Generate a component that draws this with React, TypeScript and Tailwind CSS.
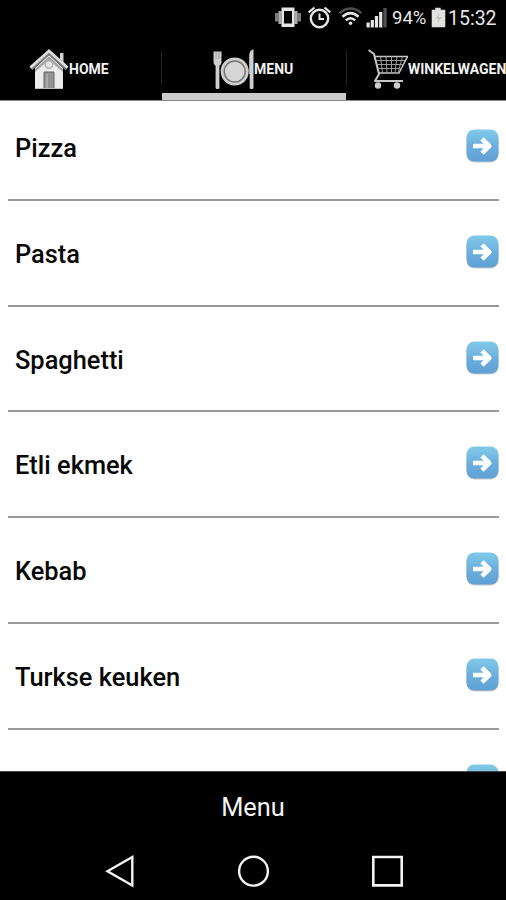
import React, { useState } from 'react'

const TABS = [
  { id: 'home', label: 'HOME' },
  { id: 'menu', label: 'MENU' },
  { id: 'cart', label: 'WINKELWAGEN' },
]

const CATEGORIES = ['Pizza', 'Pasta', 'Spaghetti', 'Etli ekmek', 'Kebab', 'Turkse keuken']

function StatusBar() {
  return (
    <div className="flex h-[38px] shrink-0 items-start pl-[274px] text-[#e6e6e6]">
      <svg className="mt-[7px] h-[21px] w-[28px] shrink-0" viewBox="0 0 28 21" fill="currentColor">
        <path fillRule="evenodd" d="M7.5 0.5h13v19.5h-13zM10 4v12.5h8V4z" />
        <path d="M4.5 4h3v13h-3zM20.5 4h3v13h-3z" opacity="0.75" />
        <path d="M1 6h3.5v8.5H1zM23.5 6H27v8.5h-3.5z" opacity="0.55" />
      </svg>
      <svg className="ml-[5px] mt-[6px] h-[23px] w-[25px] shrink-0" viewBox="0 0 25 23" fill="none" stroke="currentColor">
        <circle cx="12.5" cy="12.5" r="8.7" strokeWidth="2.4" />
        <path d="M12.5 7.5v5.5h4.5" strokeWidth="2" />
        <path d="M1.7 6.3L7.5 1.5M23.3 6.3L17.5 1.5" strokeWidth="2.2" />
      </svg>
      <svg className="ml-[6px] mt-[7px] h-[19px] w-[26px] shrink-0" viewBox="0 0 26 19" fill="none" stroke="currentColor">
        <path d="M1.5 6.2Q12.5-3 23.5 6.2" strokeWidth="2.4" opacity="0.35" />
        <path d="M4.5 9.7Q12.5 2.6 20.5 9.7" strokeWidth="2.6" />
        <path d="M7.8 13.3Q12.5 9 17.2 13.3" strokeWidth="2.4" />
        <circle cx="12.5" cy="16.2" r="1.8" fill="currentColor" stroke="none" />
      </svg>
      <svg className="ml-[2px] mt-[7px] h-[21px] w-[22px] shrink-0" viewBox="0 0 22 21" fill="currentColor">
        <path d="M0.5 15.5h3.2V20.5H0.5zM4.7 13h3.2v7.5H4.7zM8.9 9h3.2v11.5H8.9zM13.1 5h3.2v15.5h-3.2z" />
        <path d="M17.3 1h3.4v19.5h-3.4z" opacity="0.35" />
      </svg>
      <span className="ml-[4px] mt-[6px] w-[36px] whitespace-nowrap text-[18.5px] leading-[24px]">94%</span>
      <svg className="ml-[3px] mt-[7px] h-[21px] w-[15px] shrink-0" viewBox="0 0 15 21">
        <path d="M4.3 0.8h5.4v2h4.6v17.4H0.7V2.8h3.6z" fill="#e2e2e2" />
        <path d="M8.5 5.5L4.5 11.5h3l-1 5 4.2-6.5H7.8z" fill="#c4c4bc" />
      </svg>
      <span className="ml-[2px] mt-[7px] whitespace-nowrap text-[19.5px] leading-[24px]">15:32</span>
    </div>
  )
}

function HouseIcon() {
  return (
    <svg className="h-[42px] w-[40px] shrink-0" viewBox="0 0 40 42">
      <path d="M31 5h3.5v11L31 12.5z" fill="#d0d0d0" />
      <path d="M6 20L20 7l14 13v20.5H6z" fill="#ececec" />
      <path d="M6 21L20 8.5 34 21v3L20 12 6 24z" fill="#a4a4a4" />
      <path d="M1.8 20.5L20 4l18.2 16.5" fill="none" stroke="#808080" strokeWidth="4.5" />
      <path d="M1.5 19.5L20 3l18.5 16.5" fill="none" stroke="#dddddd" strokeWidth="2.6" />
      <circle cx="20" cy="16.5" r="3.8" fill="#e4e4e4" stroke="#b0b0b0" strokeWidth="1.5" />
      <path d="M15 24h10v16.5H15z" fill="#929292" stroke="#666666" />
      <path d="M18 26v14" stroke="#aaaaaa" strokeWidth="2" />
      <path d="M6 40.5h28" stroke="#bdbdbd" />
    </svg>
  )
}

function PlateIcon() {
  return (
    <svg className="h-[42px] w-[42px] shrink-0" viewBox="0 0 42 42" fill="#cfcfcf">
      <path d="M1.5 3.5h8v10c0 2.300-.8 3.500-2.100 4.200V40c0 1.300-3.800 1.300-3.800 0V17.700C2.300 17 1.500 15.800 1.500 13.500z" />
      <path d="M4.100 3.500V11M6.900 3.500V11" stroke="#777777" strokeWidth="0.6" />
      <circle cx="22.700" cy="23.500" r="14" />
      <circle cx="22.700" cy="23.500" r="10.500" fill="#d6d6d6" stroke="#777777" strokeWidth="1.5" />
      <path d="M41.500 1.500V40c0 1.300-3.800 1.300-3.800 0V26h-.5V8c0-4 1.800-6.500 4.300-6.500z" />
    </svg>
  )
}

function CartIcon() {
  return (
    <svg className="h-[42px] w-[40px] shrink-0" viewBox="0 0 40 42" fill="none" stroke="#c6c6c6">
      <path d="M0.5 2l5.5 4 5 20-4 7h28" strokeWidth="2" strokeLinejoin="round" />
      <path d="M7 8.5h32.5L31 25H11" strokeWidth="1.5" />
      <path d="M8 12.5h29M9 16.5h26.5M10 20.5h23.5M12.5 8.5l2 16.5M18 8.5l1 16.5M23.5 8.5V25M29 8.5L27 25M34.5 8.5L30 25" strokeWidth="1" stroke="#9c9c9c" />
      <circle cx="10" cy="37.500" r="3.200" fill="#cccccc" stroke="none" />
      <circle cx="29" cy="37.500" r="3.200" fill="#cccccc" stroke="none" />
    </svg>
  )
}

function ArrowBadge() {
  return (
    <svg className="h-[34px] w-[33px] shrink-0" viewBox="0 0 33 34">
      <defs>
        <linearGradient id="badge" x1="0" y1="0" x2="0" y2="1">
          <stop offset="0" stopColor="#82cae8" />
          <stop offset="0.5" stopColor="#6bb0df" />
          <stop offset="1" stopColor="#609fd3" />
        </linearGradient>
      </defs>
      <rect x="0.5" y="1.5" width="32" height="32" rx="8" fill="#c9c9c9" />
      <rect x="0.5" y="0.5" width="32" height="32" rx="8" fill="url(#badge)" />
      <path d="M7 17h16M16 9.800l7.200 7.200-7.200 7.200" fill="none" stroke="#ffffff" strokeWidth="4.600" strokeLinejoin="round" />
    </svg>
  )
}

export default function App() {
  const [activeTab, setActiveTab] = useState('menu')

  return (
    <div className="flex h-[900px] w-[506px] flex-col overflow-hidden bg-black font-['Roboto','Liberation_Sans',sans-serif]">
      <StatusBar />

      {/* Tabs, the last one runs up to the right edge */}
      <nav className="flex h-[63px] shrink-0 overflow-hidden border-b border-[#8a8a8a]">
        {TABS.map((tab) => (
          <button
            key={tab.id}
            onClick={() => setActiveTab(tab.id)}
            className={`flex shrink-0 flex-col ${tab.id === 'home' ? 'w-[161px] pl-[29px]' : 'w-[185px]'}`}
          >
            <span
              className={`flex h-[55px] w-full shrink-0 items-center pt-[6px] ${tab.id === 'menu' ? 'pl-[51px]' : ''} ${tab.id === 'cart' ? 'pl-[22px]' : ''} ${tab.id === 'home' ? '' : 'bg-[linear-gradient(#242424,#242424)] bg-[length:1px_34px] bg-[position:0_13px] bg-no-repeat'}`}
            >
              {tab.id === 'home' && <HouseIcon />}
              {tab.id === 'menu' && <PlateIcon />}
              {tab.id === 'cart' && <CartIcon />}
              <span className="whitespace-nowrap text-[14px] font-bold leading-none text-[#f2f2f2]">{tab.label}</span>
            </span>
            {activeTab === tab.id && <span className="ml-px h-[8px] w-[184px] shrink-0 bg-[#cccccc]" />}
          </button>
        ))}
      </nav>

      {/* Category list, scrolled down a few pixels */}
      <main className="h-[670px] shrink-0 overflow-hidden bg-white">
        <ul className="-mt-[6px] pl-[8px] pr-[7px]">
          {CATEGORIES.map((name) => (
            <li
              key={name}
              className="flex h-[105.8px] items-start justify-between border-b-2 border-[#999999] pl-[7px] pt-[34px]"
            >
              <span className="pt-[4px] text-[25.4px] font-medium leading-[30px] text-[#080808]">{name}</span>
              <ArrowBadge />
            </li>
          ))}
          <li className="flex justify-end pt-[34px]">
            <ArrowBadge />
          </li>
        </ul>
      </main>

      <footer className="flex flex-1 flex-col border-t border-[#444444]">
        <h1 className="pt-[20px] text-center text-[25.4px] leading-[30px] text-[#f4f4f4]">Menu</h1>
        <div className="mt-[31px] flex h-[36px] items-center pl-[104px]">
          <svg className="h-[34px] w-[32px]" viewBox="0 0 32 34" fill="none" stroke="#f4f4f4" strokeWidth="2.4">
            <path d="M28.3 3v28.5L3.5 17.2z" />
          </svg>
          <svg className="ml-[100px] h-[34px] w-[34px]" viewBox="0 0 34 34" fill="none" stroke="#f4f4f4" strokeWidth="2.4">
            <circle cx="17.5" cy="17.2" r="14.4" />
          </svg>
          <svg className="ml-[100px] h-[34px] w-[34px]" viewBox="0 0 34 34" fill="none" stroke="#f4f4f4" strokeWidth="2.6">
            <path d="M3.3 3h28.4v28.4H3.3z" />
          </svg>
        </div>
      </footer>
    </div>
  )
}
